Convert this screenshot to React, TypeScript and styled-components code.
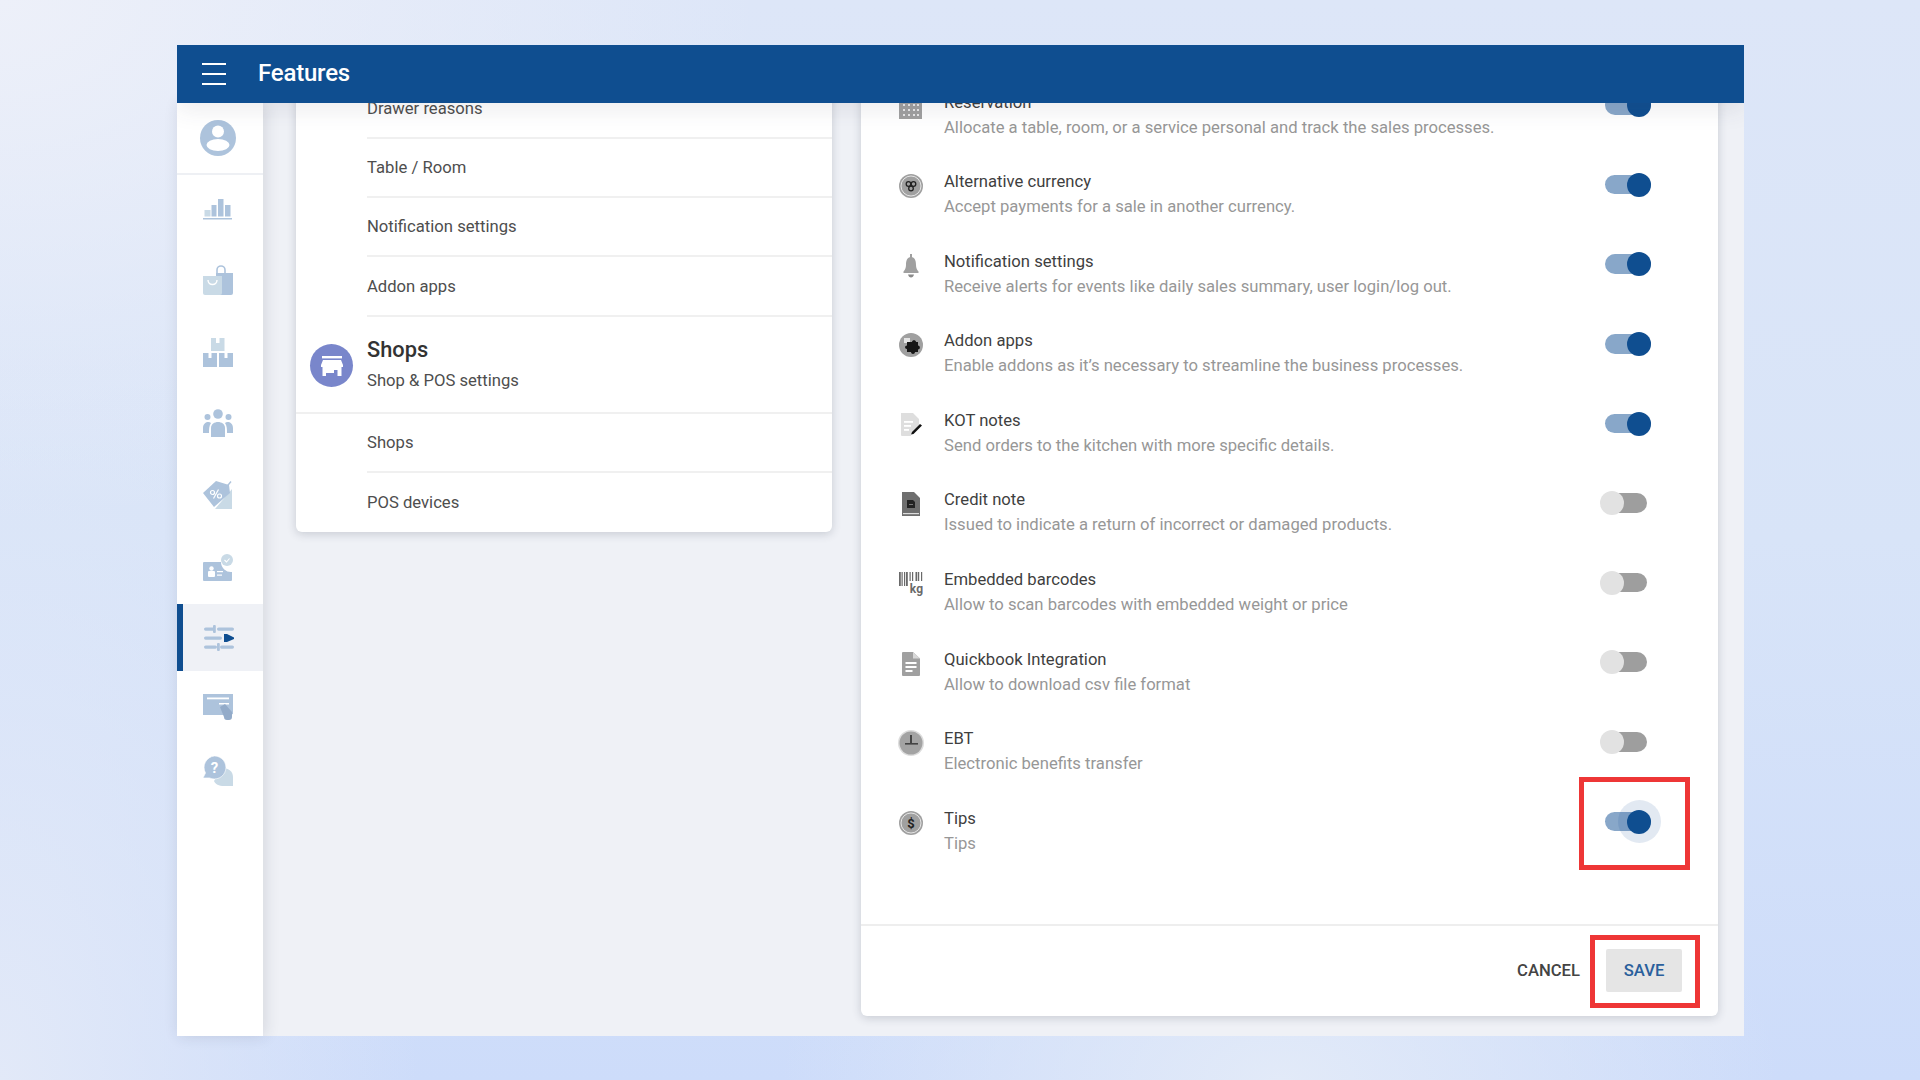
import React from 'react'
import styled, { createGlobalStyle } from 'styled-components'

const GlobalStyle = createGlobalStyle`
  html, body {
    margin: 0;
    padding: 0;
    height: 100%;
  }
  body {
    font-family: Roboto, "Liberation Sans", sans-serif;
    background:
      radial-gradient(500px 300px at 1280px 1080px, #e2eaf8, transparent),
      radial-gradient(420px 800px at 0 1080px, #e2e9f8, transparent),
      radial-gradient(760px 520px at 0 0, #edf0f9, transparent),
      linear-gradient(180deg, #dde6f8 0%, #d8e4f8 50%, #cddcfa 100%);
  }
  * {
    box-sizing: border-box;
  }
`

const Page = styled.div`
  width: 1920px;
  height: 1080px;
  padding: 45px 176px 44px 177px;
  overflow: hidden;
`

const Frame = styled.div`
  height: 100%;
  display: flex;
  flex-direction: column;
  background: #eff1f6;
`

const Header = styled.header`
  position: relative;
  z-index: 3;
  flex: 0 0 58px;
  display: flex;
  align-items: center;
  background: #0f4e90;
  box-shadow: 0 6px 24px rgba(60, 60, 80, 0.1);
  clip-path: inset(0 0 -40px 0);
`

const MenuIcon = styled.div`
  width: 24px;
  margin-left: 25px;
  display: flex;
  flex-direction: column;
  gap: 8px;
  span {
    display: block;
    height: 2px;
    background: #fff;
  }
`

const Title = styled.h1`
  margin: 0 0 2px 32px;
  color: #fff;
  font-size: 24px;
  font-weight: 500;
  letter-spacing: -0.2px;
`

const Body = styled.div`
  flex: 1;
  display: flex;
  min-height: 0;
`

const Sidebar = styled.nav`
  position: relative;
  z-index: 2;
  flex: 0 0 86px;
  background: #fff;
  box-shadow: 2px 0 14px rgba(40, 50, 70, 0.14);
`

const AvatarBlock = styled.div`
  height: 72px;
  display: flex;
  align-items: center;
  justify-content: center;
  padding-right: 5px;
  border-bottom: 2px solid #eef0f4;
`

const SideItem = styled.div<{ $h?: number; $active?: boolean }>`
  height: ${p => p.$h ?? 71.5}px;
  display: flex;
  align-items: center;
  justify-content: center;
  padding-right: ${p => (p.$active ? 8 : 5)}px;
  background: ${p => (p.$active ? '#eff1f6' : 'transparent')};
  border-left: ${p => (p.$active ? '6px solid #0f4e90' : 'none')};
`

const SideList = styled.div`
  margin-top: -2px;
`

const Main = styled.main`
  flex: 1;
  min-width: 0;
  display: flex;
  gap: 29px;
  padding: 0 26px 20px 33px;
  overflow: hidden;
  align-items: flex-start;
`

const LeftCard = styled.section`
  flex: 0 0 536px;
  margin-top: -23.5px;
  background: #fff;
  border-radius: 0 0 6px 6px;
  box-shadow: 0 2px 10px rgba(40, 50, 70, 0.2);
`

const LinkRow = styled.div<{ $last?: boolean }>`
  height: 59.3px;
  margin-left: 71px;
  display: flex;
  align-items: center;
  color: #4e4e4e;
  font-size: 16.65px;
  border-bottom: ${p => (p.$last ? 'none' : '2px solid #f0f0f0')};
`

const GroupHead = styled.div`
  height: 97px;
  display: flex;
  align-items: center;
  gap: 14px;
  padding: 3px 0 0 14px;
  border-bottom: 2px solid #f0f0f0;
`

const GroupAvatar = styled.div`
  width: 43px;
  height: 43px;
  border-radius: 50%;
  background: #7986cb;
  display: flex;
  align-items: center;
  justify-content: center;
`

const GroupTitle = styled.div`
  color: #333;
  font-size: 21.8px;
  font-weight: 500;
  line-height: 29px;
`

const GroupSub = styled.div`
  color: #4e4e4e;
  font-size: 16.65px;
  line-height: 33px;
`

const RightCard = styled.section`
  flex: 0 0 857px;
  margin-top: -36.3px;
  background: #fff;
  border-radius: 0 0 6px 6px;
  box-shadow: 0 2px 10px rgba(40, 50, 70, 0.2);
`

const FeatureList = styled.div`
  padding-bottom: 61px;
`

const FeatureRow = styled.div`
  height: 79.6px;
  display: flex;
  align-items: center;
  padding-left: 38px;
`

const FeatureIcon = styled.div`
  flex: 0 0 24px;
  min-width: 0;
  width: 24px;
  height: 24px;
  margin-right: 21px;
  display: flex;
  align-items: center;
  justify-content: center;
  svg {
    flex: none;
  }
`

const FeatureText = styled.div`
  flex: 0 0 656px;
  margin-top: 16px;
`

const FeatureName = styled.div`
  color: #3f3f3f;
  font-size: 16.65px;
  line-height: 25px;
`

const FeatureDesc = styled.div`
  color: #979797;
  font-size: 16.65px;
  line-height: 25px;
`

const Switch = styled.div`
  position: relative;
  width: 47px;
  height: 24px;
  margin-bottom: 2.5px;
`

const Track = styled.span<{ $on?: boolean }>`
  position: absolute;
  left: 5px;
  top: 2px;
  width: ${p => (p.$on ? 46 : 42)}px;
  height: 19.5px;
  border-radius: 10px;
  background: ${p => (p.$on ? '#88a7c9' : '#9e9e9e')};
`

const Thumb = styled.span<{ $on?: boolean }>`
  position: absolute;
  left: ${p => (p.$on ? 27 : 0)}px;
  top: 0;
  width: 24px;
  height: 24px;
  border-radius: 50%;
  background: ${p => (p.$on ? '#0f4e90' : '#e2e2e2')};
`

const Halo = styled.span`
  position: absolute;
  left: 17.5px;
  top: -9.5px;
  width: 43px;
  height: 43px;
  border-radius: 50%;
  background: rgba(15, 78, 144, 0.12);
`

const RedBox = styled.div`
  position: absolute;
  border: 5px solid #ee3636;
`

const SwitchMark = styled(RedBox)`
  left: -21px;
  top: -33px;
  width: 111px;
  height: 93px;
`

const SaveMark = styled(RedBox)`
  left: -16px;
  top: -14px;
  width: 110px;
  height: 73px;
`

const Footer = styled.footer`
  height: 92px;
  display: flex;
  align-items: center;
  justify-content: flex-end;
  padding-right: 36px;
  border-top: 2px solid #eeeeee;
`

const CancelButton = styled.div`
  margin-right: 26px;
  color: #444;
  font-size: 16.65px;
  font-weight: 500;
`

const SaveButton = styled.div`
  position: relative;
  width: 76px;
  height: 43px;
  display: flex;
  align-items: center;
  justify-content: center;
  border-radius: 2px;
  background: #e5e5e5;
  color: #2a5f9c;
  font-size: 16.65px;
  font-weight: 500;
`

const NAV_A = '#adc3dc'
const NAV_B = '#c9dae6'

const ChartIcon = () => (
  <svg width="30" height="22" viewBox="0 0 30 22">
    <rect x="1.5" y="12" width="6" height="6.5" fill={NAV_B} />
    <rect x="8.5" y="7" width="5" height="11.5" fill={NAV_A} />
    <rect x="15" y="1" width="5.5" height="17.5" fill={NAV_A} />
    <rect x="22" y="7" width="5.5" height="11.5" fill={NAV_A} />
    <rect x="0" y="20" width="29" height="1.5" fill={NAV_A} />
  </svg>
)

const BagIcon = () => (
  <svg width="30" height="30" viewBox="0 0 30 30">
    <path d="M13 8h17v20a2 2 0 0 1-2 2H13z" fill={NAV_A} />
    <path d="M14 8V5a4 4 0 0 1 8 0v3" fill="none" stroke={NAV_A} strokeWidth="1.6" />
    <path d="M0 11h19v17a2 2 0 0 1-2 2H2a2 2 0 0 1-2-2z" fill={NAV_B} />
    <path d="M5 15c0 6 9 6 9 0" fill="none" stroke="#fff" strokeWidth="1.4" />
  </svg>
)

const BoxesIcon = () => (
  <svg width="30" height="30" viewBox="0 0 30 30">
    <rect x="8" y="1" width="13.5" height="13" fill={NAV_B} />
    <rect x="0" y="16" width="14" height="14" fill={NAV_A} />
    <rect x="16" y="16" width="14" height="14" fill={NAV_A} />
    <rect x="13" y="1" width="3.5" height="5" fill="#fff" />
    <rect x="5.5" y="16" width="3" height="5" fill="#fff" />
    <rect x="21.5" y="16" width="3" height="5" fill="#fff" />
  </svg>
)

const PeopleIcon = () => (
  <svg width="30" height="28" viewBox="0 0 30 28">
    <circle cx="15" cy="5" r="4.8" fill={NAV_A} />
    <circle cx="4.5" cy="8" r="3" fill={NAV_A} />
    <circle cx="25.5" cy="8" r="3" fill={NAV_A} />
    <path d="M8 28v-9c0-8 14-8 14 0v9z" fill={NAV_A} />
    <path d="M0 24v-5c0-6 6-7 8-5-2 3-2 6-2 10z" fill={NAV_A} />
    <path d="M30 24v-5c0-6-6-7-8-5 2 3 2 6 2 10z" fill={NAV_A} />
  </svg>
)

const TagIcon = () => (
  <svg width="30" height="30" viewBox="0 0 30 30">
    <path d="M29 9v20H12z" fill={NAV_B} />
    <path d="M0 13 13 1l13 4 1 8-16 14z" fill={NAV_A} />
    <circle cx="9.500" cy="12.500" r="2" fill="none" stroke="#fff" strokeWidth="1.200" />
    <circle cx="16.500" cy="16" r="2" fill="none" stroke="#fff" strokeWidth="1.200" />
    <path d="M10.500 18.500 15.500 9.500" stroke="#fff" strokeWidth="1.200" />
    <path d="M23 7.500l5-6" stroke={NAV_A} strokeWidth="1.400" />
  </svg>
)

const IdCardIcon = () => (
  <svg width="30" height="27" viewBox="0 0 30 27">
    <path d="M1 8h17a10 10 0 0 0 11 10v8a1 1 0 0 1-1 1H1a1 1 0 0 1-1-1V9a1 1 0 0 1 1-1z" fill={NAV_A} />
    <circle cx="24" cy="6" r="6" fill={NAV_B} />
    <path d="M21.500 6l2 2 3-3.500" stroke="#fff" strokeWidth="1.100" fill="none" />
    <rect x="5" y="17" width="7" height="6" rx="1" fill="#fff" />
    <circle cx="8.500" cy="14.500" r="2.200" fill="#fff" />
    <rect x="14" y="17" width="6" height="1.200" fill="#fff" />
    <rect x="14" y="20.500" width="5" height="1.200" fill="#fff" />
  </svg>
)

const SlidersIcon = () => (
  <svg width="30" height="26" viewBox="0 0 30 26">
    <rect x="0" y="2.500" width="10.500" height="3.200" rx="1.600" fill={NAV_A} />
    <rect x="13" y="2.500" width="17" height="3.200" rx="1.600" fill={NAV_A} />
    <rect x="9" y="0" width="2.800" height="8" rx="1" fill={NAV_A} />
    <rect x="0" y="11.500" width="18" height="3.200" rx="1.600" fill={NAV_A} />
    <path d="M20 9h3l7 3.500v1.500l-7 3h-3z" fill="#0f4e90" />
    <rect x="0" y="20.500" width="13" height="3.200" rx="1.600" fill={NAV_A} />
    <rect x="16" y="20.500" width="14" height="3.200" rx="1.600" fill={NAV_A} />
    <rect x="13" y="18" width="2.800" height="8" rx="1" fill={NAV_A} />
  </svg>
)

const TicketIcon = () => (
  <svg width="30" height="26" viewBox="0 0 30 26">
    <path d="M0 0h30v20l-3 1H0z" fill={NAV_A} />
    <rect x="4" y="3.500" width="22" height="1.800" fill="#fff" />
    <rect x="16" y="9" width="10" height="1.500" fill="#fff" />
    <path d="M17 13l5-3 7 8v5a3 3 0 0 1-3 3h-2a3 3 0 0 1-3-3z" fill="#93abc9" />
  </svg>
)

const HelpIcon = () => (
  <svg width="30" height="30" viewBox="0 0 30 30">
    <path d="M19 12c6 0 11 3 11 9v9h-9c-5 0-9-2-10-5z" fill={NAV_B} />
    <path d="M11.500 0a11.500 11.500 0 1 1-5 21.900L0 22l2.500-5A11.500 11.500 0 0 1 11.500 0z" fill={NAV_A} stroke="#fff" strokeWidth="0.6" />
    <text x="11.500" y="17" textAnchor="middle" fontSize="15" fontWeight="700" fill="#fff" fontFamily="Roboto, sans-serif">?</text>
  </svg>
)

const UserIcon = () => (
  <svg width="36" height="36" viewBox="0 0 36 36">
    <circle cx="18" cy="18" r="18" fill={NAV_A} />
    <circle cx="18" cy="11.500" r="6" fill="#fff" />
    <ellipse cx="18" cy="25" rx="11.500" ry="6" fill="#fff" />
  </svg>
)

const StoreIcon = () => (
  <svg width="22" height="20" viewBox="0 0 22 20">
    <rect x="1" y="0" width="20" height="2.400" fill="#fff" />
    <path d="M2 4h18l2 5v2h-1.500v9h-4v-6H5v6H1.500v-9H0V9z" fill="#fff" />
    <rect x="5" y="14" width="8" height="3" fill="#fff" />
  </svg>
)

const G = '#a0a0a0'

const GridIcon = () => (
  <svg width="24" height="24" viewBox="0 0 24 24">
    <rect width="23" height="24" fill={G} />
    {[4, 9, 14, 19].map(y =>
      [4, 9, 14, 18].map(x => <rect key={`${x}-${y}`} x={x} y={y} width="2" height="2" fill="#e8e8e8" />)
    )}
  </svg>
)

const CurrencyIcon = () => (
  <svg width="24" height="24" viewBox="0 0 24 24">
    <circle cx="12" cy="12" r="12" fill={G} />
    <circle cx="12" cy="12" r="10" fill="none" stroke="#ececec" strokeWidth="0.9" />
    <circle cx="9.500" cy="10" r="2.300" fill="none" stroke="#222" strokeWidth="1.300" />
    <circle cx="14.500" cy="10" r="2.300" fill="none" stroke="#222" strokeWidth="1.300" />
    <circle cx="12" cy="14.500" r="2.300" fill="none" stroke="#222" strokeWidth="1.300" />
  </svg>
)

const BellIcon = () => (
  <svg width="24" height="24" viewBox="0 0 24 24">
    <rect x="11" y="0" width="2" height="4" fill={G} />
    <path d="M12 3c4 0 5 4 5 8 0 3 1 5 2.500 6.500v1.500h-15v-1.500C6 16 7 14 7 11c0-4 1-8 5-8z" fill={G} />
    <path d="M9 20.500h6c-.5 2-1.500 3-3 3s-2.500-1-3-3z" fill="#8a8a8a" />
  </svg>
)

const PuzzleIcon = () => (
  <svg width="24" height="24" viewBox="0 0 24 24">
    <circle cx="12" cy="12" r="12" fill={G} />
    <rect x="5" y="5" width="6" height="5" fill="#e4e4e4" />
    <path d="M11 9h2c0-2.500 4-2.500 4 0h2v3.500c2.500 0 2.500 4 0 4v2.500h-3c0 2.500-4 2.500-4 0H8v-3c-2.500 0-2.500-3.500 0-3.500v-3.500h3z" fill="#161616" />
  </svg>
)

const NoteIcon = () => (
  <svg width="24" height="24" viewBox="0 0 24 24">
    <path d="M2 0h12l6 6v6l-8 9v2H3a1 1 0 0 1-1-1z" fill="#dedede" />
    <rect x="5" y="8" width="9" height="1.800" fill="#fff" />
    <rect x="5" y="12" width="7" height="1.800" fill="#fff" />
    <rect x="5" y="16" width="5" height="1.800" fill="#fff" />
    <path d="M13 19 21 11l2 1.500L14.500 21l-2.500.5z" fill="#111" />
  </svg>
)

const CreditIcon = () => (
  <svg width="24" height="24" viewBox="0 0 24 24">
    <path d="M3 0h12l6 6v18H3z" fill="#6f6f6f" />
    <rect x="4" y="21" width="16" height="1.200" fill="#ddd" />
    <path d="M8 8h6l2 2v6H8z" fill="#222" />
    <rect x="10" y="12" width="4" height="1" fill="#777" />
  </svg>
)

const BarcodeIcon = () => (
  <svg width="24" height="24" viewBox="0 0 24 24">
    {[0, 2.500, 5, 7, 10.500, 13, 16.500, 19, 22].map((x, i) => (
      <rect key={x} x={x} y="0" width={i % 3 === 0 ? 1.800 : 1.200} height={x < 10 ? 14 : 9} fill="#6a6a6a" />
    ))}
    <text x="24" y="21" textAnchor="end" fontSize="12" fontWeight="700" fill="#6a6a6a" fontFamily="Roboto, sans-serif">kg</text>
  </svg>
)

const DocIcon = () => (
  <svg width="24" height="24" viewBox="0 0 24 24">
    <path d="M3 1a1 1 0 0 1 1-1h10l7 6.500V23a1 1 0 0 1-1 1H4a1 1 0 0 1-1-1z" fill="#a0a0a0" />
    <path d="M14 0l7 6.500h-7z" fill="#d8d8d8" />
    <rect x="6.500" y="10" width="11" height="2" fill="#fff" />
    <rect x="6.500" y="14" width="11" height="2" fill="#fff" />
    <rect x="6.500" y="18" width="7" height="2" fill="#fff" />
  </svg>
)

const ClockIcon = () => (
  <svg width="26" height="26" viewBox="0 0 26 26">
    <circle cx="13" cy="13" r="13" fill="#dcdcdc" />
    <circle cx="13" cy="13" r="11.500" fill="#a3a3a3" />
    <rect x="12" y="5" width="2" height="9" fill="#444" />
    <rect x="7" y="13" width="13" height="1.600" fill="#444" />
  </svg>
)

const DollarIcon = () => (
  <svg width="24" height="24" viewBox="0 0 24 24">
    <circle cx="12" cy="12" r="12" fill={G} />
    <circle cx="12" cy="12" r="10" fill="none" stroke="#ececec" strokeWidth="0.9" />
    <text x="12" y="16.500" textAnchor="middle" fontSize="13" fontWeight="700" fill="#222" fontFamily="Roboto, sans-serif">$</text>
  </svg>
)

const links = ['Drawer reasons', 'Table / Room', 'Notification settings', 'Addon apps']

const features = [
  { name: 'Reservation', desc: 'Allocate a table, room, or a service personal and track the sales processes.', on: true, icon: <GridIcon /> },
  { name: 'Alternative currency', desc: 'Accept payments for a sale in another currency.', on: true, icon: <CurrencyIcon /> },
  { name: 'Notification settings', desc: 'Receive alerts for events like daily sales summary, user login/log out.', on: true, icon: <BellIcon /> },
  { name: 'Addon apps', desc: 'Enable addons as it’s necessary to streamline the business processes.', on: true, icon: <PuzzleIcon /> },
  { name: 'KOT notes', desc: 'Send orders to the kitchen with more specific details.', on: true, icon: <NoteIcon /> },
  { name: 'Credit note', desc: 'Issued to indicate a return of incorrect or damaged products.', on: false, icon: <CreditIcon /> },
  { name: 'Embedded barcodes', desc: 'Allow to scan barcodes with embedded weight or price', on: false, icon: <BarcodeIcon /> },
  { name: 'Quickbook Integration', desc: 'Allow to download csv file format', on: false, icon: <DocIcon /> },
  { name: 'EBT', desc: 'Electronic benefits transfer', on: false, icon: <ClockIcon /> },
  { name: 'Tips', desc: 'Tips', on: true, focused: true, icon: <DollarIcon /> },
]

export default function App() {
  return (
    <Page>
      <GlobalStyle />
      <Frame>
        <Header>
          <MenuIcon>
            <span />
            <span />
            <span />
          </MenuIcon>
          <Title>Features</Title>
        </Header>
        <Body>
          <Sidebar>
            <AvatarBlock>
              <UserIcon />
            </AvatarBlock>
            <SideList>
              <SideItem><ChartIcon /></SideItem>
              <SideItem><BagIcon /></SideItem>
              <SideItem><BoxesIcon /></SideItem>
              <SideItem><PeopleIcon /></SideItem>
              <SideItem><TagIcon /></SideItem>
              <SideItem $h={73.5}><IdCardIcon /></SideItem>
              <SideItem $h={67} $active><SlidersIcon /></SideItem>
              <SideItem><TicketIcon /></SideItem>
              <SideItem $h={57}><HelpIcon /></SideItem>
            </SideList>
          </Sidebar>
          <Main>
            <LeftCard>
              {links.map(l => (
                <LinkRow key={l}>{l}</LinkRow>
              ))}
              <GroupHead>
                <GroupAvatar>
                  <StoreIcon />
                </GroupAvatar>
                <div>
                  <GroupTitle>Shops</GroupTitle>
                  <GroupSub>Shop &amp; POS settings</GroupSub>
                </div>
              </GroupHead>
              <LinkRow>Shops</LinkRow>
              <LinkRow $last>POS devices</LinkRow>
            </LeftCard>
            <RightCard>
              <FeatureList>
                {features.map(f => (
                  <FeatureRow key={f.name}>
                    <FeatureIcon>{f.icon}</FeatureIcon>
                    <FeatureText>
                      <FeatureName>{f.name}</FeatureName>
                      <FeatureDesc>{f.desc}</FeatureDesc>
                    </FeatureText>
                    <Switch>
                      <Track $on={f.on} />
                      {f.focused && <Halo />}
                      <Thumb $on={f.on} />
                      {f.focused && <SwitchMark />}
                    </Switch>
                  </FeatureRow>
                ))}
              </FeatureList>
              <Footer>
                <CancelButton>CANCEL</CancelButton>
                <SaveButton>
                  SAVE
                  <SaveMark />
                </SaveButton>
              </Footer>
            </RightCard>
          </Main>
        </Body>
      </Frame>
    </Page>
  )
}
